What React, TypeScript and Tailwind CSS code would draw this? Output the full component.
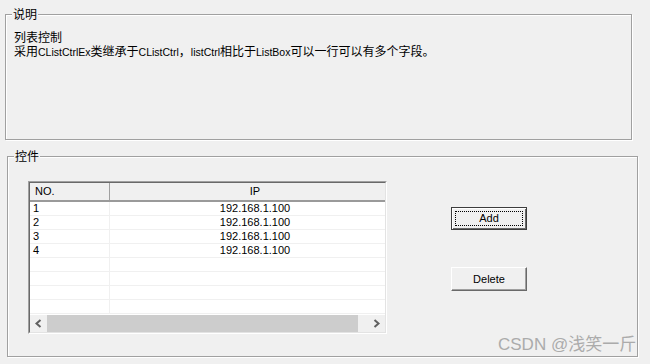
import React from 'react';

const ROWS = ['1', '2', '3', '4', '', '', '', ''];

function Lat({ children }: { children: React.ReactNode }) {
  return <span className="font-['Liberation_Sans',sans-serif] text-[10.5px]">{children}</span>;
}

function Chevron({ dir }: { dir: 'left' | 'right' }) {
  return (
    <svg width="17" height="17" viewBox="0 0 17 17">
      <path
        d={dir === 'left' ? 'M10.5 5 L6.5 8.5 L10.5 12' : 'M6.5 5 L10.5 8.5 L6.5 12'}
        fill="none"
        stroke="#606060"
        strokeWidth="2"
      />
    </svg>
  );
}

export default function App() {
  return (
    <div className="relative w-[650px] h-[364px] overflow-hidden bg-[#f0f0f0] pt-[14px] text-black font-['Noto_Sans_CJK_SC',sans-serif]">
      {/* 说明 group */}
      <div className="relative ml-[5px] w-[627px] h-[126px] border border-[#a0a0a0] shadow-[1px_1px_0_#fff,inset_1px_1px_0_#fff] pl-[8px] pt-[15px]">
        <span className="absolute left-[6px] top-[-8px] bg-[#f0f0f0] px-[1px] text-[12px] leading-[14px]">说明</span>
        <div className="text-[12px] leading-[14px] whitespace-nowrap">
          <div>列表控制</div>
          <div>
            采用<Lat>CListCtrlEx</Lat>类继承于<Lat>CListCtrl</Lat>，<Lat>listCtrl</Lat>相比于<Lat>ListBox</Lat>可以一行可以有多个字段。
          </div>
        </div>
      </div>

      {/* 控件 group */}
      <div className="relative mt-[16px] ml-[7px] w-[631px] h-[201px] border border-[#a0a0a0] shadow-[1px_1px_0_#fff,inset_1px_1px_0_#fff] pl-[20px] pt-[24px] flex items-start">
        <span className="absolute left-[6px] top-[-8px] bg-[#f0f0f0] px-[1px] text-[12px] leading-[14px]">控件</span>

        {/* list control */}
        <div className="w-[359px] h-[153px] border border-t-[#a0a0a0] border-l-[#a0a0a0] border-r-white border-b-white">
          <div className="h-full flex flex-col border border-t-[#696969] border-l-[#696969] border-r-[#e3e3e3] border-b-[#e3e3e3] bg-white font-['Liberation_Sans',sans-serif] text-[11px] leading-[13px] overflow-hidden">
            <div className="flex h-[19px] shrink-0 bg-[#f0f0f0] border-b-2 border-[#9a9a9a]">
              <div className="w-[80px] shrink-0 border-r border-[#a0a0a0] pl-[5px] flex items-center">NO.</div>
              <div className="w-[290px] shrink-0 flex items-center justify-center">IP</div>
            </div>
            <div className="flex-1 overflow-hidden">
              {ROWS.map((n, i) => (
                <div key={i} className="flex h-[14px] border-b border-[#f0f0f0]">
                  <div className="w-[80px] shrink-0 border-r border-[#f0f0f0] pl-[3px]">{n}</div>
                  <div className="w-[290px] shrink-0 text-center">{n ? '192.168.1.100' : ''}</div>
                </div>
              ))}
            </div>
            <div className="flex h-[17px] shrink-0 bg-[#f0f0f0]">
              <Chevron dir="left" />
              <div className="w-[311px] bg-[#cdcdcd]" />
              <div className="flex-1" />
              <Chevron dir="right" />
            </div>
          </div>
        </div>

        {/* buttons */}
        <div className="ml-[64px] pt-[26px] flex flex-col font-['Liberation_Sans',sans-serif] text-[11px]">
          <button className="relative w-[76px] h-[23px] bg-[#f0f0f0] border border-[#3c3c3c] shadow-[inset_1px_1px_0_#fff,inset_-1px_-1px_0_#696969] flex items-center justify-center">
            <span className="absolute inset-[3px] border border-dotted border-black" />
            Add
          </button>
          <button className="mt-[37px] w-[76px] h-[24px] bg-[#f0f0f0] border border-t-white border-l-white border-r-[#696969] border-b-[#696969] shadow-[inset_-1px_-1px_0_#a0a0a0] flex items-center justify-center">
            Delete
          </button>
        </div>
      </div>

      {/* watermark */}
      <span className="absolute left-[498px] top-[335px] text-[17px] leading-[20px] text-[#ababab] whitespace-nowrap font-['Liberation_Sans','Noto_Sans_CJK_SC',sans-serif]">
        CSDN @浅笑一斤
      </span>
    </div>
  );
}
